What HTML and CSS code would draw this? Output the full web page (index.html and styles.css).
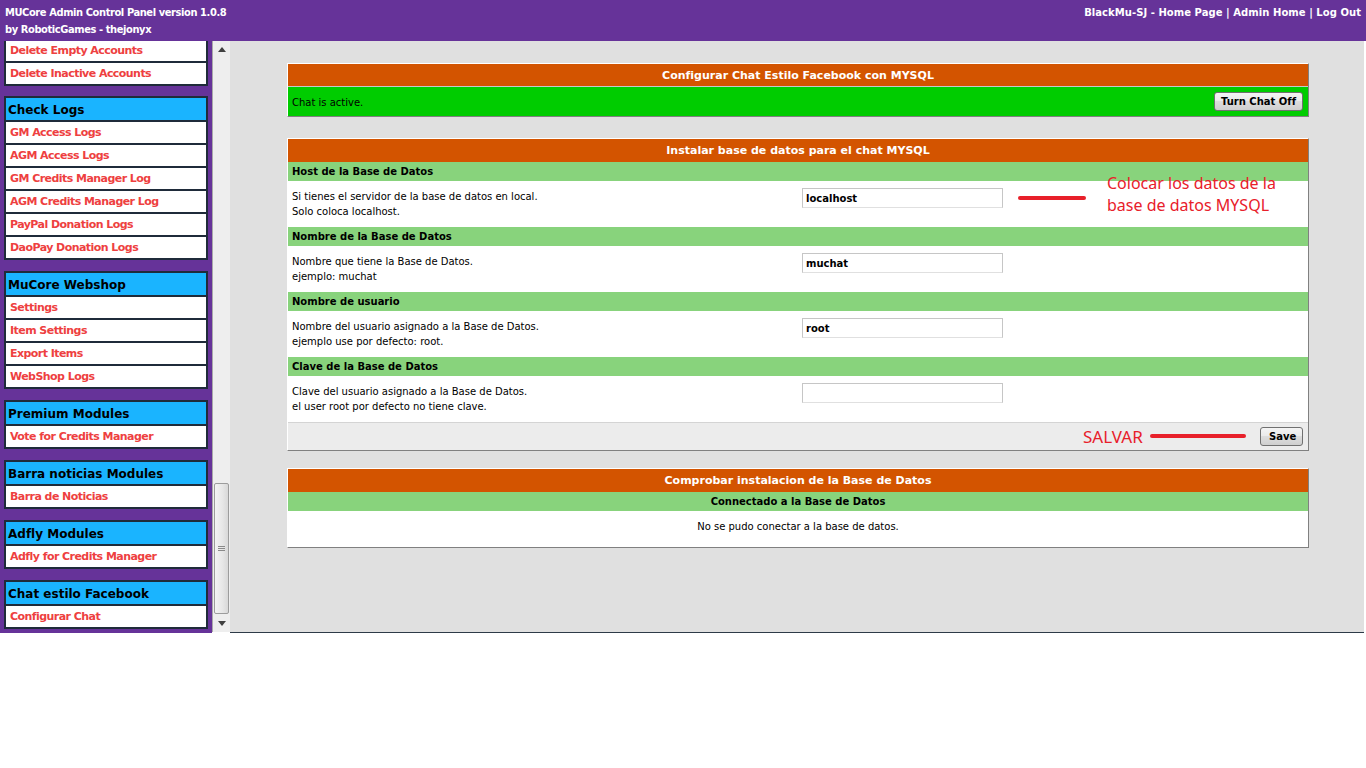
FILE: index.html
```html
<!DOCTYPE html>
<html lang="es">
<head>
<meta charset="utf-8">
<title>MUCore Admin Control Panel</title>
<link rel="stylesheet" href="styles.css">
</head>
<body>
<div class="app">
  <header class="topbar">
    <div class="brand">MUCore Admin Control Panel version 1.0.8<br>by RoboticGames - thejonyx</div>
    <nav class="toplinks">BlackMu-SJ - Home Page | Admin Home | Log Out</nav>
  </header>
  <div class="frame">
    <aside class="sidebar">
      <div class="group group-cut">
        <a class="item">Delete Empty Accounts</a>
        <a class="item">Delete Inactive Accounts</a>
      </div>
      <div class="group">
        <div class="group-title">Check Logs</div>
        <a class="item">GM Access Logs</a>
        <a class="item">AGM Access Logs</a>
        <a class="item">GM Credits Manager Log</a>
        <a class="item">AGM Credits Manager Log</a>
        <a class="item">PayPal Donation Logs</a>
        <a class="item">DaoPay Donation Logs</a>
      </div>
      <div class="group">
        <div class="group-title">MuCore Webshop</div>
        <a class="item">Settings</a>
        <a class="item">Item Settings</a>
        <a class="item">Export Items</a>
        <a class="item">WebShop Logs</a>
      </div>
      <div class="group">
        <div class="group-title">Premium Modules</div>
        <a class="item">Vote for Credits Manager</a>
      </div>
      <div class="group">
        <div class="group-title">Barra noticias Modules</div>
        <a class="item">Barra de Noticias</a>
      </div>
      <div class="group">
        <div class="group-title">Adfly Modules</div>
        <a class="item">Adfly for Credits Manager</a>
      </div>
      <div class="group">
        <div class="group-title">Chat estilo Facebook</div>
        <a class="item">Configurar Chat</a>
      </div>
    </aside>
    <div class="scrollbar">
      <div class="sb-btn"><svg width="8" height="5" viewBox="0 0 8 5"><path d="M0 5 L4 0 L8 5 Z" fill="#404040"/></svg></div>
      <div class="sb-track">
        <div class="sb-thumb"><svg width="7" height="6" viewBox="0 0 7 6"><path d="M0 0.5H7M0 2.5H7M0 4.5H7" stroke="#8a8a8a" stroke-width="1"/></svg></div>
      </div>
      <div class="sb-btn"><svg width="8" height="5" viewBox="0 0 8 5"><path d="M0 0 L8 0 L4 5 Z" fill="#404040"/></svg></div>
    </div>
    <main class="content">
      <section class="panel panel-chat">
        <div class="panel-head">Configurar Chat Estilo Facebook con MYSQL</div>
        <div class="status-row">
          <span class="status-text">Chat is active.</span>
          <button class="btn">Turn Chat Off</button>
        </div>
      </section>

      <section class="panel panel-install">
        <div class="panel-head">Instalar base de datos para el chat MYSQL</div>

        <div class="sub-head">Host de la Base de Datos</div>
        <div class="field-row">
          <div class="field-desc">Si tienes el servidor de la base de datos en local.<br>Solo coloca localhost.</div>
          <div class="field-input"><input type="text" value="localhost"></div>
        </div>

        <div class="sub-head">Nombre de la Base de Datos</div>
        <div class="field-row">
          <div class="field-desc">Nombre que tiene la Base de Datos.<br>ejemplo: muchat</div>
          <div class="field-input"><input type="text" value="muchat"></div>
        </div>

        <div class="sub-head">Nombre de usuario</div>
        <div class="field-row">
          <div class="field-desc">Nombre del usuario asignado a la Base de Datos.<br>ejemplo use por defecto: root.</div>
          <div class="field-input"><input type="text" value="root"></div>
        </div>

        <div class="sub-head">Clave de la Base de Datos</div>
        <div class="field-row">
          <div class="field-desc">Clave del usuario asignado a la Base de Datos.<br>el user root por defecto no tiene clave.</div>
          <div class="field-input"><input type="password" value=""></div>
        </div>

        <div class="panel-foot">
          <button class="btn btn-save">Save</button>
        </div>

        <div class="note note-data">Colocar los datos de la<br>base de datos MYSQL</div>
        <div class="mark mark-data"></div>
        <div class="note note-save">SALVAR</div>
        <div class="mark mark-save"></div>
      </section>

      <section class="panel panel-check">
        <div class="panel-head">Comprobar instalacion de la Base de Datos</div>
        <div class="sub-head centered">Connectado a la Base de Datos</div>
        <div class="result-row">No se pudo conectar a la base de datos.</div>
      </section>
    </main>
  </div>
</div>
</body>
</html>
```

FILE: styles.css
```css
* { box-sizing: border-box; }

html, body {
  margin: 0;
  padding: 0;
  background: #ffffff;
  font-family: "DejaVu Sans", Verdana, sans-serif;
  font-size: 10px;
  color: #000;
}

.app {
  width: 1366px;
}

/* ---------- top bar ---------- */
.topbar {
  height: 41px;
  background: #663399;
  color: #ffffff;
  display: flex;
  justify-content: space-between;
  align-items: flex-start;
  padding: 4px 5px 0 5px;
  font-weight: bold;
  line-height: 17px;
}

.brand {
  font-family: "DejaVu Sans Condensed", "DejaVu Sans", sans-serif;
  font-stretch: condensed;
  font-size: 11px;
  letter-spacing: -0.4px;
}

.toplinks {
  font-size: 10px;
  letter-spacing: 0.05px;
}

/* ---------- frame ---------- */
.frame {
  display: flex;
  height: 592px;
}

.sidebar {
  width: 212px;
  flex: none;
  background: #663399;
  overflow: hidden;
}

.group {
  margin: 0 4px 11px 4px;
  border: 2px solid #1f2b3a;
  background: #1f2b3a;
  display: flex;
  flex-direction: column;
  gap: 2px;
}

.group-cut {
  margin-top: -3px;
  margin-bottom: 10px;
}

.group-title {
  height: 22px;
  line-height: 22px;
  padding-top: 1px;
  background: #1ab4ff;
  color: #000;
  font-weight: bold;
  font-size: 12px;
  padding-left: 2px;
}

.item {
  height: 21px;
  line-height: 21px;
  background: #ffffff;
  color: #ee4040;
  font-weight: bold;
  font-size: 11px;
  padding-left: 4px;
  letter-spacing: -0.55px;
  text-decoration: none;
}

/* ---------- scrollbar ---------- */
.scrollbar {
  width: 18px;
  flex: none;
  background: #eeeeee;
  border-left: 1px solid #a9a9a9;
  display: flex;
  flex-direction: column;
  height: 591px;
}

.sb-btn {
  height: 17px;
  flex: none;
  display: flex;
  align-items: center;
  justify-content: center;
}

.sb-track {
  flex: 1;
  padding: 425px 1px 0 1px;
}

.sb-thumb {
  height: 131px;
  border: 1px solid #9c9c9c;
  border-radius: 2px;
  background: linear-gradient(to right, #f4f4f4, #e6e6e6 60%, #d8d8d8);
  display: flex;
  align-items: center;
  justify-content: center;
}

/* ---------- content ---------- */
.content {
  flex: 1;
  margin-right: 2px;
  background: #e0e0e0;
  height: 592px;
  border-bottom: 1px solid #2d3a48;
  padding: 22px 0 0 2px;
}

.panel {
  width: 1022px;
  margin: 0 auto 20px auto;
  border: 1px solid;
  border-color: #ffffff #808080 #808080 #ffffff;
  background: #ffffff;
  position: relative;
}

.panel-chat { margin-bottom: 21px; }
.panel-install { margin-bottom: 17px; }

.panel-head {
  height: 23px;
  line-height: 23px;
  background: #d35400;
  color: #ffffff;
  text-align: center;
  font-weight: bold;
  font-size: 11px;
}

.panel-chat .panel-head {
  border-bottom: 1px solid #c8c8c8;
}

.status-row {
  height: 29px;
  background: #00cc00;
  display: flex;
  align-items: center;
  justify-content: space-between;
  padding: 0 5px 0 4px;
}

.status-text { padding-top: 2px; }

.btn {
  height: 19px;
  padding: 0 6px;
  border: 1px solid #707070;
  border-radius: 3px;
  background: linear-gradient(#f4f4f4, #ebebeb 45%, #dddddd 50%, #cfcfcf);
  font-family: "DejaVu Sans", Verdana, sans-serif;
  font-weight: bold;
  font-size: 10px;
  color: #000;
  line-height: 17px;
}

.btn-save { padding: 0 8px; width: 43px; }

.sub-head {
  height: 19px;
  line-height: 19px;
  background: #88d37c;
  font-weight: bold;
  padding-left: 4px;
}

.sub-head.centered {
  text-align: center;
  padding-left: 0;
}

.field-row {
  display: grid;
  grid-template-columns: 1fr 1fr;
  padding: 8px 0 8px 0;
  line-height: 15px;
}

.field-desc { padding-left: 4px; }

.field-input { padding-left: 4px; }

.field-input input {
  width: 201px;
  height: 20px;
  margin-top: -1px;
  border: 1px solid #c6c6c6;
  border-bottom-color: #e0e0e0;
  padding: 0 3px;
  font-family: "DejaVu Sans", Verdana, sans-serif;
  font-weight: bold;
  font-size: 10px;
  color: #000;
  outline: none;
  display: block;
}

.panel-foot {
  height: 28px;
  background: #ececec;
  border-top: 1px solid #d4d4d4;
  display: flex;
  align-items: center;
  justify-content: flex-end;
  padding-right: 5px;
}

.result-row {
  text-align: center;
  padding: 8px 0 13px 0;
  line-height: 15px;
}

/* ---------- red annotations ---------- */
.note {
  position: absolute;
  color: #e8202a;
  font-family: "Noto Sans", "Open Sans", sans-serif;
  font-size: 16px;
  line-height: 22px;
  white-space: nowrap;
}

.note-data { left: 819px; top: 33px; }
.note-save { left: 795px; top: 287px; font-size: 17px; }

.mark {
  position: absolute;
  height: 4px;
  border-radius: 2px;
  background: #e8202a;
}

.mark-data { left: 730px; top: 57px; width: 68px; }
.mark-save { left: 862px; top: 295px; width: 96px; }
```
